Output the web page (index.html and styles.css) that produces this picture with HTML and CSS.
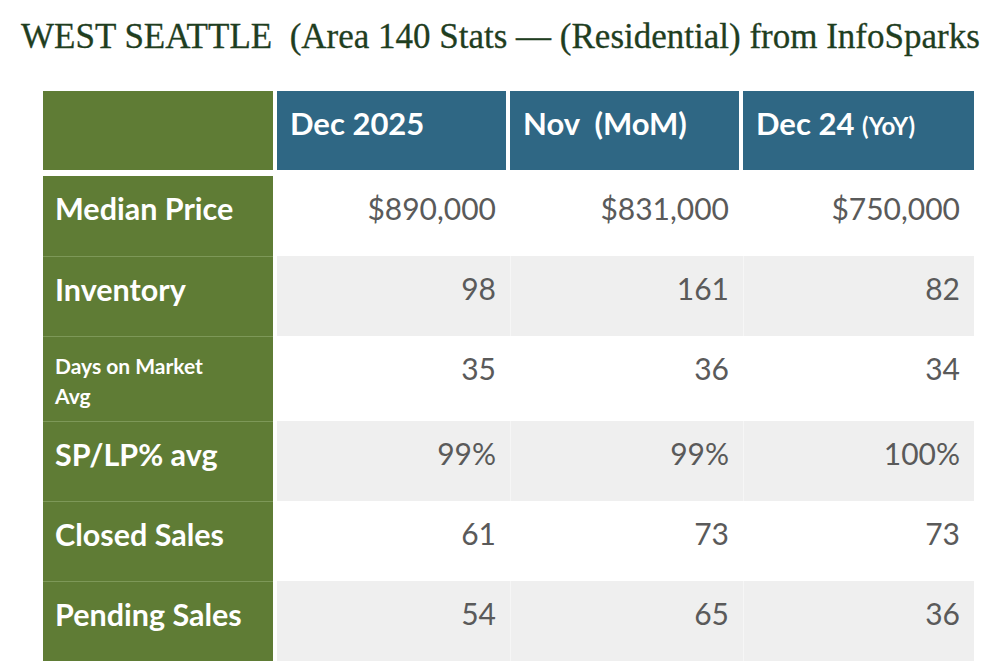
FILE: index.html
```html
<!DOCTYPE html>
<html>
<head>
<meta charset="utf-8">
<link rel="stylesheet" href="styles.css">
</head>
<body>
<h1 class="title">WEST SEATTLE&nbsp; (Area 140 Stats — (Residential) from InfoSparks</h1>
<div class="stats">
  <div class="head">
    <div class="hcell corner"></div>
    <div class="hcell">Dec 2025</div>
    <div class="hcell">Nov&nbsp; (MoM)</div>
    <div class="hcell">Dec 24 <span class="small">(YoY)</span></div>
  </div>
  <div class="row first">
    <div class="label">Median Price</div>
    <div class="val">$890,000</div>
    <div class="val">$831,000</div>
    <div class="val">$750,000</div>
  </div>
  <div class="row alt">
    <div class="label">Inventory</div>
    <div class="val">98</div>
    <div class="val">161</div>
    <div class="val">82</div>
  </div>
  <div class="row tall">
    <div class="label smalllabel">Days on Market<br>Avg</div>
    <div class="val">35</div>
    <div class="val">36</div>
    <div class="val">34</div>
  </div>
  <div class="row alt">
    <div class="label">SP/LP% avg</div>
    <div class="val">99%</div>
    <div class="val">99%</div>
    <div class="val">100%</div>
  </div>
  <div class="row">
    <div class="label">Closed Sales</div>
    <div class="val">61</div>
    <div class="val">73</div>
    <div class="val">73</div>
  </div>
  <div class="row alt">
    <div class="label">Pending Sales</div>
    <div class="val">54</div>
    <div class="val">65</div>
    <div class="val">36</div>
  </div>
</div>
</body>
</html>
```

FILE: styles.css
```css
html, body {
  margin: 0;
  padding: 0;
  background: #ffffff;
}
body {
  width: 1004px;
  height: 670px;
  overflow: hidden;
}
.title {
  margin: 0;
  padding: 16px 0 0 21px;
  font-family: "Liberation Serif", "Times New Roman", serif;
  font-weight: normal;
  font-size: 35px;
  line-height: 42px;
  color: #1f3e1f;
  white-space: nowrap;
  -webkit-text-stroke: 0.3px #1f3e1f;
}
.stats {
  margin: 33px 0 0 43px;
  width: 931px;
  font-family: Lato, "Open Sans", sans-serif;
}
.head {
  display: grid;
  grid-template-columns: 230px 229px 229px 231px;
  column-gap: 4px;
  margin-bottom: 6px;
}
.hcell {
  height: 79px;
  box-sizing: border-box;
  padding: 14px 0 0 13px;
  background: #2f6784;
  color: #ffffff;
  font-weight: bold;
  font-size: 31px;
  line-height: 36px;
}
.hcell.corner {
  background: #5f7c35;
}
.small {
  font-size: 24px;
}
.row {
  display: grid;
  grid-template-columns: 234px 233px 233px 231px;
  height: 80px;
}
.row.tall {
  height: 85px;
}
.label {
  box-sizing: border-box;
  margin-right: 4px;
  padding: 14px 0 0 12px;
  background: #5f7c35;
  border-top: 1px solid #7d9858;
  color: #ffffff;
  font-weight: bold;
  font-size: 30.5px;
  line-height: 36px;
}
.row.first .label {
  border-top: none;
}
.label.smalllabel {
  font-size: 21px;
  line-height: 30px;
}
.val {
  box-sizing: border-box;
  padding: 14px 14px 0 0;
  text-align: right;
  color: #5a5a5a;
  font-size: 30px;
  line-height: 36px;
}
.row.alt .val {
  background: #efefef;
}
.row.alt .val + .val {
  border-left: 1px solid #f6f6f6;
}
```
